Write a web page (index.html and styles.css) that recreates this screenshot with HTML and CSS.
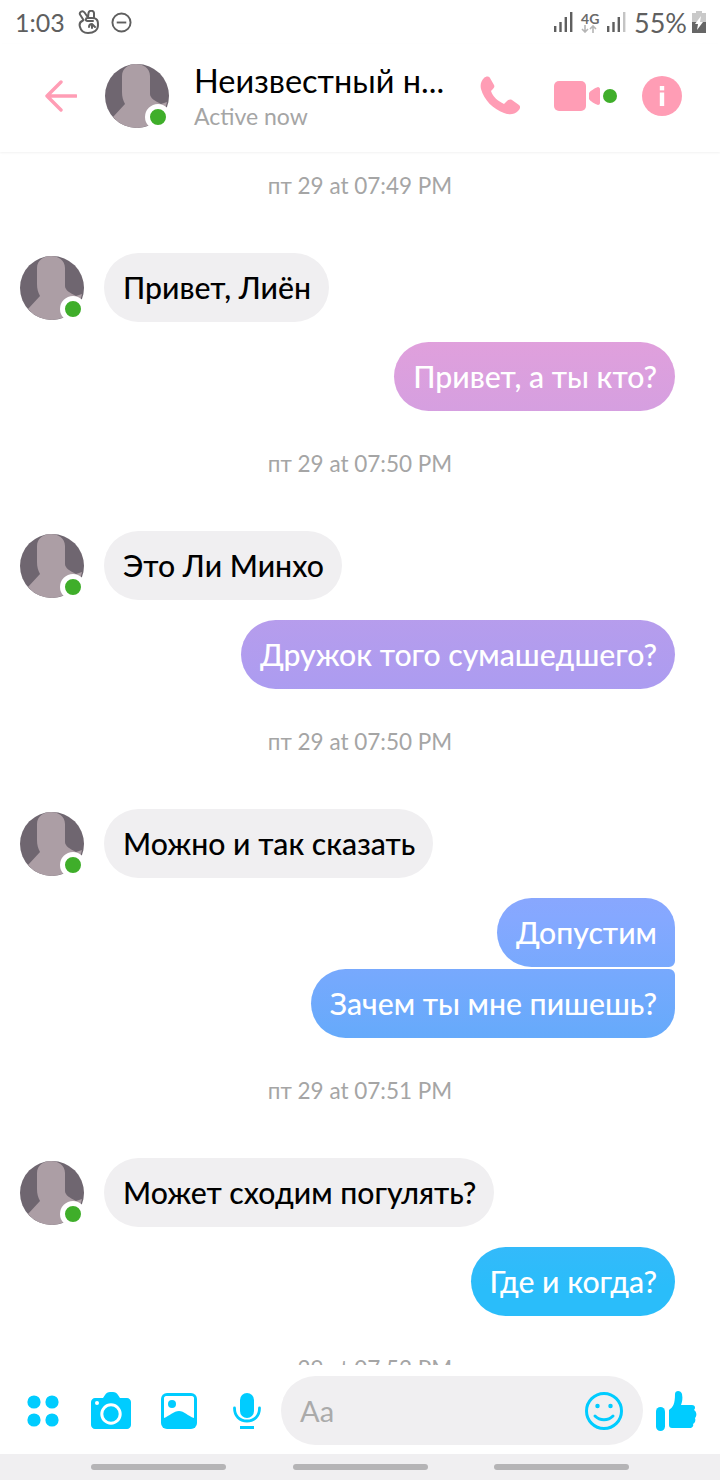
FILE: index.html
```html
<!DOCTYPE html>
<html lang="en">

<head>
  <meta charset="UTF-8" />
  <meta name="viewport" content="width=device-width, initial-scale=1.0" />
  <title>Chat</title>
  <link rel="stylesheet" href="styles.css">
</head>

<body>
  <svg class="defs" width="0" height="0">
    <symbol id="person" viewBox="0 0 64 64">
      <circle cx="32" cy="32" r="32" fill="#6f6670" />
      <path fill="#ac9ea5" d="M17 12C17 4 24 0 31 0s14 4 14 12v18c0 4 5 7 11 10l6-2A32 32 0 0 1 32 64 32 32 0 0 1 8 53L20 40c-2-4-3-7-3-12z" />
    </symbol>
  </svg>

  <div class="status-bar">
    <span class="time">1:03</span>
    <svg class="hand" viewBox="0 0 22 24" fill="none" stroke="#5f5f5f" stroke-width="2" stroke-linecap="round" stroke-linejoin="round">
      <path d="M5.500 10 2 4.500C1 2 4.500 0 6.500 2.500L10 7.500 10.500 3c.5-3 5-3 5.500 0v5" />
      <path d="M5 10.500C2.500 11.500 1 14 2 17c1 4 4 6 8 6 6 0 10-3 10-8 0-2 0-4-1-5-1-2-3-2-5-2H9.500c-2 0-2.500 3 0 3H15" />
      <path d="M14 14c-2 0-3 1-3 3M14 14l3 3M14 14v4" />
    </svg>
    <svg class="dnd" viewBox="0 0 22 22" fill="none" stroke="#5f5f5f" stroke-width="2">
      <circle cx="11" cy="11" r="9.500" />
      <path d="M6 11h10" />
    </svg>
    <div class="status-right">
      <svg class="signal" viewBox="0 0 19 20" fill="#5f5f5f">
        <rect x="0" y="14" width="2.400" height="6" />
        <rect x="5.300" y="10" width="2.400" height="10" />
        <rect x="10.600" y="5" width="2.400" height="15" />
        <rect x="16" y="0" width="2.400" height="20" />
      </svg>
      <div class="net">
        <span>4G</span>
        <svg viewBox="0 0 16 8" fill="none" stroke="#b5b5b5" stroke-width="1.600">
          <path d="M4 0v7M1 4l3 3 3-3M12 8V1M9 4l3-3 3 3" />
        </svg>
      </div>
      <svg class="signal" viewBox="0 0 19 20" fill="#5f5f5f">
        <rect x="0" y="14" width="2.400" height="6" />
        <rect x="5.300" y="10" width="2.400" height="10" />
        <rect x="10.600" y="5" width="2.400" height="15" />
        <rect x="16" y="0" width="2.400" height="20" fill="#c4c4c4" />
      </svg>
      <span class="battery-text">55%</span>
      <svg class="battery" viewBox="0 0 14 22">
        <path fill="#c9c9c9" d="M4 0h6v2h4v9H0V2h4z" />
        <path fill="#666" d="M0 11h14v11H0z" />
        <path fill="#fff" d="M9 5 3 13h3l-1 6 6-8H8z" />
      </svg>
    </div>
  </div>

  <header>
    <svg class="back" viewBox="0 0 32 32" fill="none" stroke="#ff9db5" stroke-width="3.400" stroke-linecap="round" stroke-linejoin="round">
      <path d="M31 16H2M16 2 2 16l14 14" />
    </svg>
    <div class="avatar">
      <svg viewBox="0 0 64 64"><use href="#person" /></svg>
      <span class="online"></span>
    </div>
    <div class="title">
      <div class="name">Неизвестный н...</div>
      <div class="active">Active now</div>
    </div>
    <svg class="call" viewBox="0 0 40 40" fill="#ff9db5">
      <path d="M4 2C6 0 9 0 10 2l4 7c1 2 0 3-3 6 2 6 7 10 13 13l3-3c1-1 3-2 5-1l7 5c2 2 1 4-1 6-4 4-9 4-14 2C13 33 4 24 1 13 0 9 1 5 4 2z" />
    </svg>
    <svg class="video" viewBox="0 0 63 30">
      <rect x="0" y="0" width="32" height="30" rx="5" fill="#ff9db5" />
      <path d="M35 12c1-2 6-5 9-6 1 0 2 1 2 2v14c0 1-1 2-2 2-3-1-8-4-9-6z" fill="#ff9db5" />
      <circle cx="56" cy="15" r="7" fill="#3fae2a" />
    </svg>
    <svg class="info" viewBox="0 0 40 40">
      <circle cx="20" cy="20" r="20" fill="#ff9db5" />
      <rect x="17.800" y="10" width="4.400" height="4.400" fill="#fff" />
      <rect x="17.800" y="16.500" width="4.400" height="13.500" fill="#fff" />
    </svg>
  </header>

  <main class="chat">
    <div class="stamp">пт 29 at 07:49 PM</div>
    <div class="row">
      <div class="avatar">
        <svg viewBox="0 0 64 64"><use href="#person" /></svg>
        <span class="online"></span>
      </div>
      <div class="bubble in">Привет, Лиён</div>
    </div>
    <div class="row out">
      <div class="bubble sent">Привет, а ты кто?</div>
    </div>

    <div class="stamp">пт 29 at 07:50 PM</div>
    <div class="row">
      <div class="avatar">
        <svg viewBox="0 0 64 64"><use href="#person" /></svg>
        <span class="online"></span>
      </div>
      <div class="bubble in">Это Ли Минхо</div>
    </div>
    <div class="row out">
      <div class="bubble sent">Дружок того сумашедшего?</div>
    </div>

    <div class="stamp">пт 29 at 07:50 PM</div>
    <div class="row">
      <div class="avatar">
        <svg viewBox="0 0 64 64"><use href="#person" /></svg>
        <span class="online"></span>
      </div>
      <div class="bubble in">Можно и так сказать</div>
    </div>
    <div class="row out">
      <div class="bubble sent first">Допустим</div>
    </div>
    <div class="row out tight">
      <div class="bubble sent last">Зачем ты мне пишешь?</div>
    </div>

    <div class="stamp">пт 29 at 07:51 PM</div>
    <div class="row">
      <div class="avatar">
        <svg viewBox="0 0 64 64"><use href="#person" /></svg>
        <span class="online"></span>
      </div>
      <div class="bubble in">Может сходим погулять?</div>
    </div>
    <div class="row out">
      <div class="bubble sent">Где и когда?</div>
    </div>

    <div class="stamp">пт 29 at 07:52 PM</div>
  </main>

  <div class="composer">
    <svg class="apps" viewBox="0 0 32 32" fill="#00ccff">
      <circle cx="7" cy="7" r="6.600" />
      <circle cx="25" cy="7" r="6.600" />
      <circle cx="7" cy="25" r="6.600" />
      <circle cx="25" cy="25" r="6.600" />
    </svg>
    <svg class="camera" viewBox="0 0 40 37">
      <path fill="#00ccff" d="M4 6h8l2-3c1-2 3-3 5-3h3c2 0 4 1 5 3l2 3h7c2 0 4 2 4 4v23c0 2-2 4-4 4H4c-2 0-4-2-4-4V10c0-2 2-4 4-4z" />
      <circle cx="20" cy="22" r="9.200" fill="none" stroke="#fff" stroke-width="3" />
      <circle cx="6" cy="11" r="2" fill="#fff" />
    </svg>
    <svg class="image" viewBox="0 0 36 36">
      <rect width="36" height="36" rx="6" fill="#00ccff" />
      <path fill="#fff" d="M5 3h26c1 0 2 1 2 2v20c-6-2-10-7-15-7S8 23 3 25V5c0-1 1-2 2-2z" />
      <circle cx="11" cy="11" r="4" fill="#00ccff" />
    </svg>
    <svg class="mic" viewBox="0 0 28 36">
      <rect x="7" y="0" width="14" height="25" rx="7" fill="#00ccff" />
      <path d="M1.500 15c0 8 5 13 12.500 13s12.500-5 12.500-13" fill="none" stroke="#00ccff" stroke-width="2.800" stroke-linecap="round" />
      <rect x="7" y="33" width="14" height="3" fill="#00ccff" />
    </svg>
    <div class="input">
      <span class="placeholder">Aa</span>
      <svg class="smile" viewBox="0 0 38 38" fill="none" stroke="#00ccff" stroke-width="3" stroke-linecap="round">
        <circle cx="19" cy="19" r="17.500" />
        <path d="M10 24c5 5 13 5 18 0" />
        <circle cx="12.500" cy="14" r="1.500" fill="#00ccff" stroke-width="1.500" />
        <circle cx="25.500" cy="14" r="1.500" fill="#00ccff" stroke-width="1.500" />
      </svg>
    </div>
    <svg class="like" viewBox="0 0 42 41" fill="#00ccff">
      <rect x="0" y="17" width="9" height="24" rx="4.500" />
      <path d="M13 20c4-3 6-6 6-16 0-4 6-4 7 0 1 5 0 8-1 11h11c3 0 4 3 2 5 3 2 3 6 1 8 1 2 0 5-2 6 1 2-1 4-3 4H16c-2 0-3-1-3-3z" />
    </svg>
  </div>

  <div class="nav-bar">
    <span></span>
    <span></span>
    <span></span>
  </div>
</body>

</html>
```

FILE: styles.css
```css
* {
  margin: 0;
  padding: 0;
  box-sizing: border-box;
  font-family: 'Lato', 'Noto Sans', sans-serif;
}

body {
  background: #fff;
  color: #000;
  width: 720px;
  height: 1480px;
  display: flex;
  flex-direction: column;
  overflow: hidden;
}

svg {
  display: block;
  flex-shrink: 0;
}

.defs {
  position: absolute;
}

/* status bar */
.status-bar {
  height: 44px;
  padding: 0 14px 0 15px;
  display: flex;
  align-items: center;
  color: #5f5f5f;
}

.time {
  font-size: 25px;
  width: 63px;
}

.hand {
  width: 22px;
  height: 24px;
}

.dnd {
  width: 21px;
  height: 21px;
  margin-left: 11px;
}

.status-right {
  margin-left: auto;
  display: flex;
  align-items: center;
}

.signal {
  width: 19px;
  height: 20px;
}

.net {
  width: 16px;
  margin: 0 10px 0 8px;
  font-size: 14px;
  font-weight: 700;
  line-height: 13px;
  text-align: center;
  color: #6a6a6a;
}

.battery-text {
  font-size: 27px;
  margin-left: 8px;
}

.battery {
  width: 14px;
  height: 22px;
  margin-left: 5px;
}

/* header */
header {
  height: 108px;
  padding: 0 38px 4px 45px;
  display: flex;
  align-items: center;
  box-shadow: 0 1px 2px #f2f2f2;
  position: relative;
}

.back {
  width: 32px;
  height: 32px;
}

.avatar {
  width: 64px;
  height: 64px;
  position: relative;
  flex-shrink: 0;
}

.avatar svg {
  width: 64px;
  height: 64px;
}

.online {
  position: absolute;
  left: 40px;
  top: 40px;
  width: 26px;
  height: 26px;
  border-radius: 50%;
  background: #3fae2a;
  border: 5px solid #fff;
}

header .avatar {
  margin-left: 28px;
}

.title {
  margin-left: 25px;
  width: 286px;
}

.name {
  font-size: 32.5px;
  line-height: 40px;
}

.active {
  font-size: 23px;
  line-height: 30px;
  color: #a5a5a5;
}

.call {
  width: 40px;
  height: 40px;
}

.video {
  width: 63px;
  height: 30px;
  margin-left: 34px;
}

.info {
  width: 40px;
  height: 40px;
  margin-left: 25px;
}

/* messages */
.chat {
  flex: 1;
  min-height: 0;
  overflow: hidden;
  padding: 21px 45px 0 20px;
}

.stamp {
  font-size: 22.5px;
  line-height: 26px;
  color: #a5a5a5;
  text-align: center;
  margin: 40px 0 54px 25px;
}

.stamp:first-child {
  margin-top: 0;
}

.row {
  display: flex;
  align-items: center;
  margin-top: 20px;
}

.stamp + .row {
  margin-top: 0;
}

.row.tight {
  margin-top: 2px;
}

.row.out {
  justify-content: flex-end;
}

.bubble {
  font-size: 30.2px;
  font-weight: 500;
  line-height: 35px;
  padding: 17px 18px 17px 19px;
  border-radius: 35px;
}

.in {
  background: #f0eff1;
  margin-left: 20px;
}

.sent {
  color: #fff;
  background: linear-gradient(to bottom, #e0a0dc 23%, #ad9cf0 46%, #85a8ff 62%, #66aafb 70%, #2abdfa 87%) fixed;
}

.first {
  border-radius: 35px 30px 6px 35px;
}

.last {
  border-radius: 35px 6px 30px 35px;
}

/* composer */
.composer {
  height: 89px;
  padding: 11px 22px 9px 27px;
  display: flex;
  align-items: center;
  background: #fff;
}

.apps {
  width: 32px;
  height: 32px;
}

.camera {
  width: 40px;
  height: 37px;
  margin-left: 32px;
}

.image {
  width: 36px;
  height: 36px;
  margin-left: 30px;
}

.mic {
  width: 28px;
  height: 36px;
  margin-left: 36px;
}

.input {
  width: 362px;
  height: 69px;
  margin-left: 20px;
  padding: 0 20px 0 19px;
  border-radius: 35px;
  background: #f0eff1;
  display: flex;
  align-items: center;
  justify-content: space-between;
}

.placeholder {
  font-size: 29px;
  color: #aaa;
}

.smile {
  width: 38px;
  height: 38px;
}

.like {
  width: 42px;
  height: 41px;
  margin-left: 13px;
}

.nav-bar {
  height: 26px;
  background: #f0eff1;
  padding: 10px 91px 0;
  display: flex;
  justify-content: space-between;
}

.nav-bar span {
  width: 135px;
  height: 6px;
  border-radius: 3px;
  background: #b5b4b6;
}
```
